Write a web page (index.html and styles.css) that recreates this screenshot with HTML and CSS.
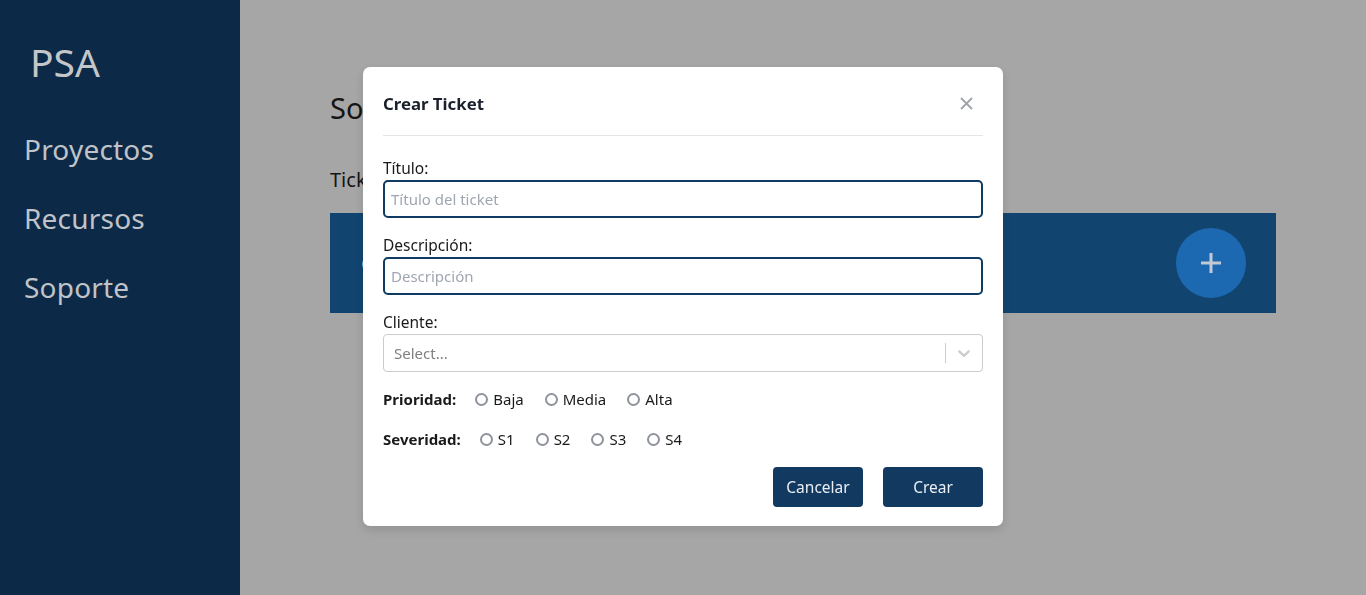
FILE: index.html
```html
<!DOCTYPE html>
<html lang="es">
<head>
<meta charset="utf-8">
<title>PSA - Soporte</title>
<link rel="stylesheet" href="styles.css">
</head>
<body>
<div class="app">
  <aside class="sidebar">
    <div class="brand">PSA</div>
    <nav class="nav">
      <a class="nav-item">Proyectos</a>
      <a class="nav-item">Recursos</a>
      <a class="nav-item">Soporte</a>
    </nav>
  </aside>
  <main class="main">
    <h1 class="page-title">Soporte</h1>
    <h2 class="section-title">Tickets</h2>
    <div class="bar">
      <span class="bar-text">Crear ticket</span>
      <button class="fab" aria-label="Agregar">
        <svg width="22" height="22" viewBox="0 0 22 22"><path d="M11 1v20M1 11h20" stroke="#c3cad3" stroke-width="3" fill="none"/></svg>
      </button>
    </div>
  </main>
</div>

<div class="overlay">
  <div class="modal">
    <div class="modal-header">
      <span class="modal-title">Crear Ticket</span>
      <button class="close" aria-label="Cerrar">
        <svg width="13" height="13" viewBox="0 0 13 13"><path d="M1 1l11 11M12 1L1 12" stroke="#9ea3ab" stroke-width="1.8" fill="none"/></svg>
      </button>
    </div>
    <div class="divider"></div>
    <div class="modal-body">
      <div class="field">
        <label class="label">Título:</label>
        <div class="input"><span class="ph">Título del ticket</span></div>
      </div>
      <div class="field">
        <label class="label">Descripción:</label>
        <div class="input"><span class="ph">Descripción</span></div>
      </div>
      <div class="field">
        <label class="label">Cliente:</label>
        <div class="select">
          <span class="select-ph">Select...</span>
          <span class="sep"></span>
          <span class="indicator">
            <svg width="20" height="20" viewBox="0 0 20 20"><path fill="#cccccc" d="M4.516 7.548c0.436-0.446 1.043-0.481 1.576 0l3.908 3.747 3.908-3.747c0.533-0.481 1.141-0.446 1.574 0 0.436 0.445 0.408 1.197 0 1.615-0.406 0.418-4.695 4.502-4.695 4.502-0.217 0.223-0.502 0.335-0.787 0.335s-0.57-0.112-0.789-0.335c0 0-4.287-4.084-4.695-4.502s-0.436-1.17 0-1.615z"/></svg>
          </span>
        </div>
      </div>
      <div class="radio-row first">
        <span class="radio-label">Prioridad:</span>
        <span class="opt"><span class="radio"></span>Baja</span>
        <span class="opt"><span class="radio"></span>Media</span>
        <span class="opt"><span class="radio"></span>Alta</span>
      </div>
      <div class="radio-row">
        <span class="radio-label">Severidad:</span>
        <span class="opt"><span class="radio"></span>S1</span>
        <span class="opt"><span class="radio"></span>S2</span>
        <span class="opt"><span class="radio"></span>S3</span>
        <span class="opt"><span class="radio"></span>S4</span>
      </div>
      <div class="actions">
        <button class="btn btn-cancel">Cancelar</button>
        <button class="btn btn-create">Crear</button>
      </div>
    </div>
  </div>
</div>
</body>
</html>
```

FILE: styles.css
```css
* { box-sizing: border-box; }
html, body { margin: 0; padding: 0; height: 100%; }
body {
  font-family: "Noto Sans", "Open Sans", sans-serif;
  background: #a6a6a6;
  overflow: hidden;
}
.app { display: flex; height: 595px; }
.sidebar {
  width: 240px;
  flex: none;
  background: #0c2a48;
  color: #c2c5c9;
  padding: 36px 0 0 24px;
}
.brand {
  font-size: 39px;
  line-height: 52px;
  padding-left: 6px;
  color: #c4c6c9;
}
.nav { display: flex; flex-direction: column; margin-top: 42px; }
.nav-item {
  font-size: 28px;
  line-height: 38px;
  margin-bottom: 31px;
  letter-spacing: 0.2px;
  color: #c0c3c7;
}
.main {
  flex: 1;
  padding: 84px 90px 0 90px;
  color: #151515;
}
.page-title {
  margin: 0;
  font-size: 29px;
  font-weight: 400;
  line-height: 48px;
}
.section-title {
  margin: 33px 0 0 0;
  font-size: 20px;
  font-weight: 400;
  line-height: 30px;
}
.bar {
  margin-top: 18px;
  height: 100px;
  background: #11456f;
  display: flex;
  align-items: center;
  justify-content: space-between;
  padding: 0 30px 0 31px;
}
.bar-text { color: #b8c0c8; font-size: 20px; }
.fab {
  width: 70px; height: 70px;
  border-radius: 50%;
  border: none;
  background: #1d69b1;
  display: flex; align-items: center; justify-content: center;
  padding: 0;
}
.overlay {
  position: fixed;
  inset: 0;
  display: flex;
  justify-content: center;
  align-items: flex-start;
}
.modal {
  position: relative;
  margin-top: 67px;
  width: 640px;
  background: #fff;
  border-radius: 7px;
  box-shadow: 0 4px 10px rgba(0,0,0,0.12);
  padding: 0 20px 19px 20px;
  color: #1a202c;
}
.modal-header {
  height: 68px;
  padding-top: 25px;
}
.modal-title {
  font-size: 16.8px;
  font-weight: 700;
  line-height: 24px;
  color: #1a202c;
}
.close {
  position: absolute;
  top: 20px; right: 21px;
  width: 32px; height: 32px;
  border: none; background: transparent;
  display: flex; align-items: center; justify-content: center;
  padding: 0;
}
.divider { height: 1px; background: #e4e5e7; }
.modal-body { padding-top: 20px; }
.field { margin-bottom: 15px; }
.label {
  display: block;
  font-size: 15.5px;
  line-height: 24px;
  color: #1a1a1a;
}
.input {
  height: 38px;
  border: 2px solid #0f3a62;
  border-radius: 5px;
  display: flex;
  align-items: center;
  padding-left: 6px;
}
.ph { color: #a0a6b1; font-size: 15px; }
.select {
  height: 38px;
  border: 1px solid #cccccc;
  border-radius: 4px;
  display: flex;
  align-items: center;
  padding-left: 10px;
}
.select-ph { flex: 1; color: #808080; font-size: 15px; }
.sep { width: 1px; height: 20px; background: #cccccc; }
.indicator { width: 36px; display: flex; justify-content: center; }
.radio-row {
  display: flex;
  align-items: center;
  height: 24px;
  margin-top: 16px;
  font-size: 15px;
  color: #1a1a1a;
}
.radio-row.first { margin-top: 2px; }
.radio-label { font-weight: 700; margin-right: 19px; }
.opt { display: inline-flex; align-items: center; margin-right: 21px; }
.radio {
  width: 13px; height: 13px;
  border: 2px solid #8e939c;
  border-radius: 50%;
  margin-right: 5px;
}
.actions {
  display: flex;
  justify-content: flex-end;
  gap: 20px;
  margin-top: 16px;
}
.btn {
  height: 40px;
  border: none;
  border-radius: 4px;
  background: #123a60;
  color: #e9eef4;
  font-family: "Noto Sans", "Open Sans", sans-serif;
  font-size: 15.5px;
  padding: 0;
}
.btn-cancel { width: 90px; }
.btn-create { width: 100px; }
```
